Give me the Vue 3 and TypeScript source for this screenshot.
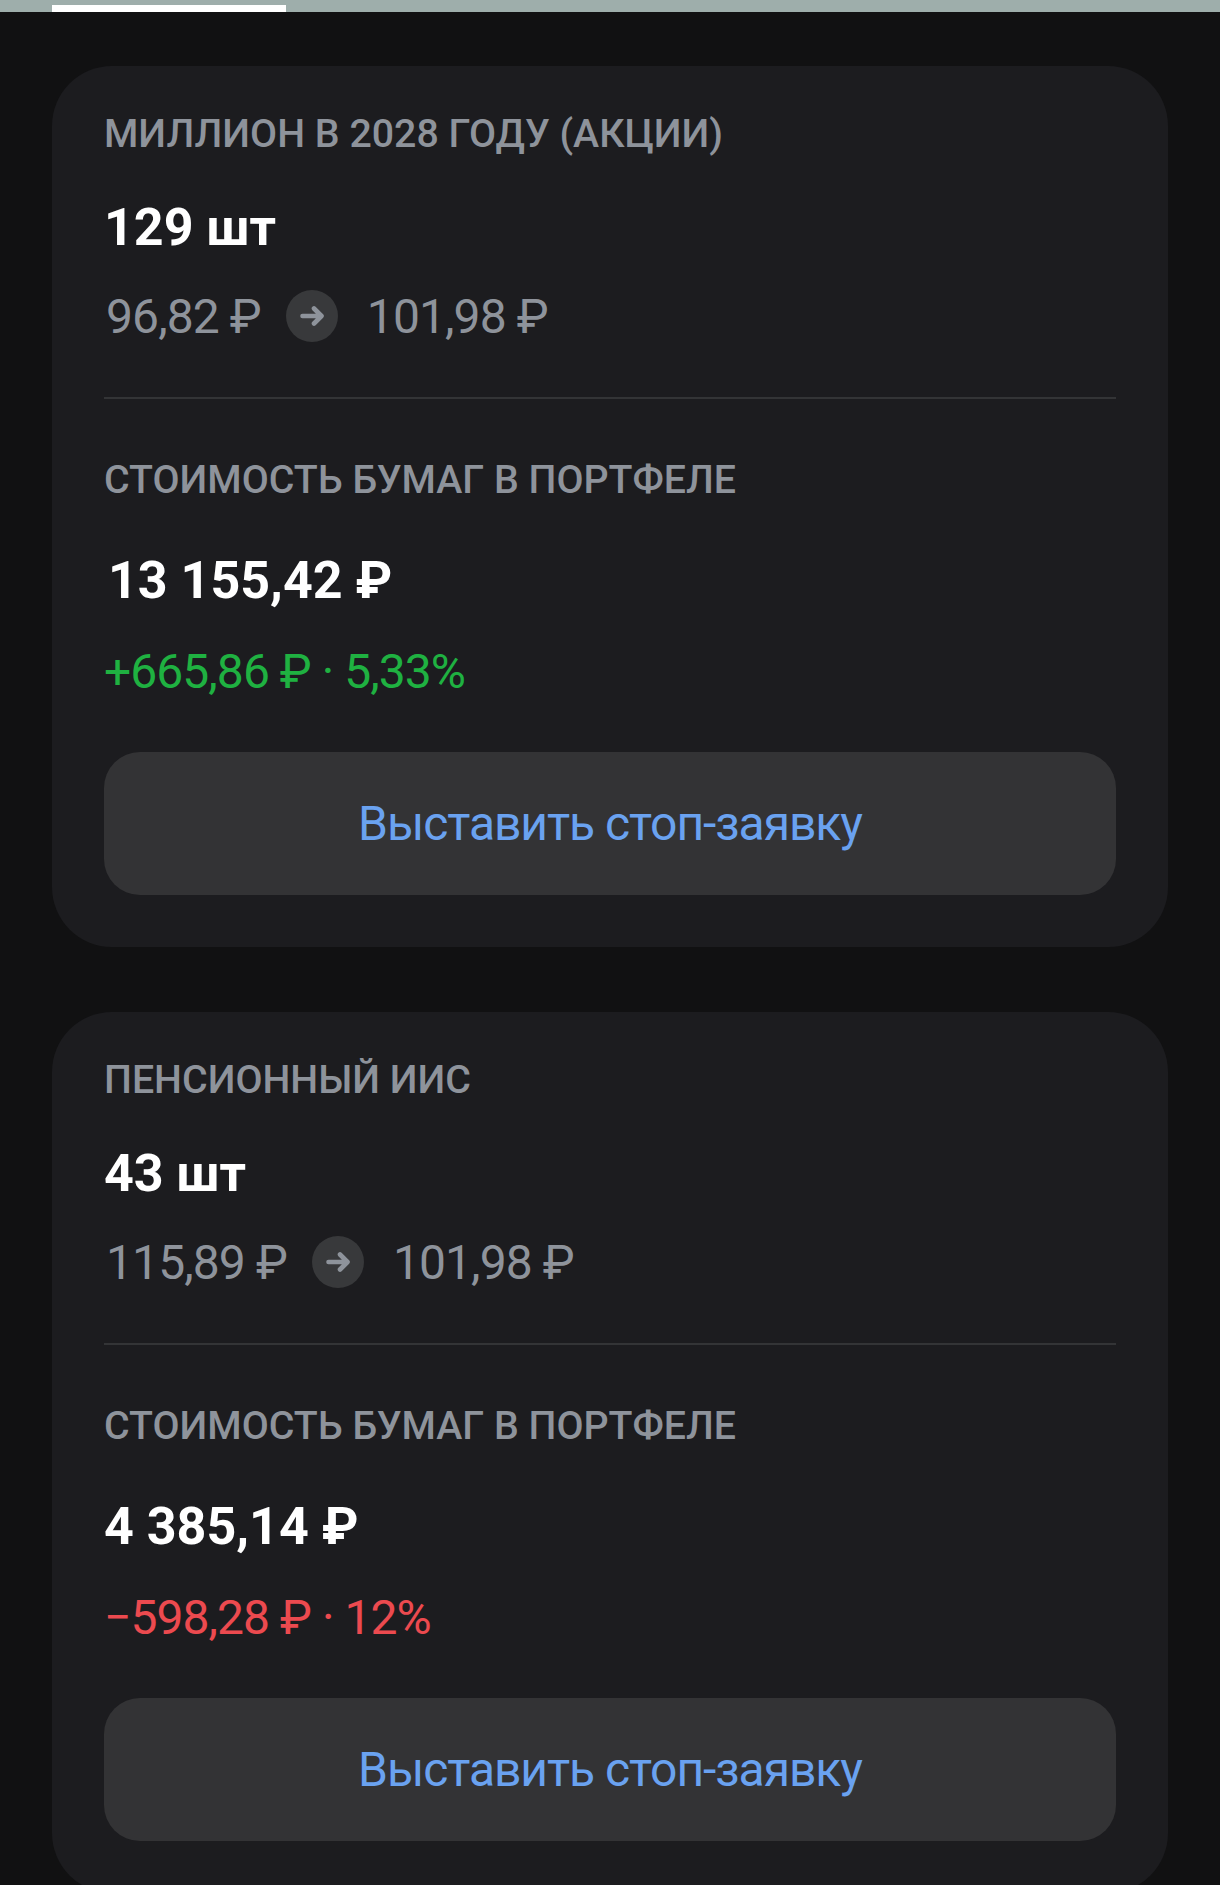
<script setup lang="ts">
interface Position {
  title: string
  count: string
  buy: string
  now: string
  total: string
  delta: string
  positive: boolean
  shiftTotal?: boolean
}

const positions: Position[] = [
  {
    title: 'Миллион в 2028 году (акции)',
    count: '129 шт',
    buy: '96,82 ₽',
    now: '101,98 ₽',
    total: '13 155,42 ₽',
    delta: '+665,86 ₽ · 5,33%',
    positive: true,
    shiftTotal: true
  },
  {
    title: 'Пенсионный ИИС',
    count: '43 шт',
    buy: '115,89 ₽',
    now: '101,98 ₽',
    total: '4 385,14 ₽',
    delta: '−598,28 ₽ · 12%',
    positive: false
  }
]
</script>

<template>
  <div class="page">
    <div class="topbar">
      <div class="tab-active"></div>
    </div>

    <div class="list">
      <section v-for="item in positions" :key="item.title" class="card">
        <div class="label">{{ item.title }}</div>
        <div class="amount count">{{ item.count }}</div>
        <div class="prices">
          <span>{{ item.buy }}</span>
          <span class="arrow">
            <svg width="24" height="24" viewBox="0 0 24 24" fill="none">
              <path
                d="M2.5 12H21M14 4.5L21.5 12L14 19.5"
                stroke="#8e939b"
                stroke-width="4.6"
                stroke-linecap="round"
                stroke-linejoin="round"
              />
            </svg>
          </span>
          <span class="price-now">{{ item.now }}</span>
        </div>

        <div class="divider"></div>

        <div class="label">Стоимость бумаг в портфеле</div>
        <div class="amount total" :class="{ shifted: item.shiftTotal }">{{ item.total }}</div>
        <div class="delta" :class="item.positive ? 'up' : 'down'">{{ item.delta }}</div>

        <button class="stop-btn" type="button">Выставить стоп-заявку</button>
      </section>
    </div>
  </div>
</template>

<style>
html,
body {
  background: #111112;
}
</style>

<style scoped>
.page {
  width: 1220px;
  height: 1885px;
  overflow: hidden;
  background: #111112;
  font-family: Roboto, "Liberation Sans", sans-serif;
}

.topbar {
  height: 12px;
  background: #9eaeab;
  padding-left: 52px;
  display: flex;
  align-items: flex-end;
}

.tab-active {
  width: 234px;
  height: 7px;
  background: #ffffff;
}

.list {
  display: flex;
  flex-direction: column;
  gap: 65px;
  padding: 54px 52px 0;
}

.card {
  height: 881px;
  flex-shrink: 0;
  box-sizing: border-box;
  padding: 45px 52px 0;
  background: #1c1c1f;
  border-radius: 60px;
}

.label {
  height: 46px;
  line-height: 46px;
  font-size: 39.3px;
  font-weight: 500;
  color: #8e939b;
  text-transform: uppercase;
}

.amount {
  height: 60px;
  line-height: 60px;
  font-size: 52px;
  font-weight: 700;
  color: #ffffff;
}

.count {
  margin-top: 41px;
}

.prices {
  margin-top: 30px;
  padding-left: 2px;
  display: flex;
  align-items: center;
  gap: 25px;
  height: 56px;
  font-size: 48px;
  letter-spacing: -0.9px;
  color: #8e939b;
}

.price-now {
  margin-left: 4px;
}

.arrow {
  width: 52px;
  height: 52px;
  border-radius: 50%;
  background: #38393b;
  display: flex;
  align-items: center;
  justify-content: center;
}

.divider {
  margin-top: 53px;
  margin-bottom: 58px;
  height: 2px;
  background: #333436;
}

.total {
  margin-top: 48px;
}

.shifted {
  padding-left: 4px;
}

.delta {
  margin-top: 33px;
  height: 56px;
  line-height: 56px;
  font-size: 48px;
  letter-spacing: -0.95px;
}

.up {
  color: #1fb141;
}

.down {
  color: #ec4a4f;
}

.stop-btn {
  display: block;
  width: 100%;
  height: 143px;
  margin-top: 52px;
  padding: 0;
  border: none;
  border-radius: 36px;
  background: #333335;
  color: #6aa2f0;
  font-family: inherit;
  font-size: 48px;
  letter-spacing: -1.05px;
}
</style>
